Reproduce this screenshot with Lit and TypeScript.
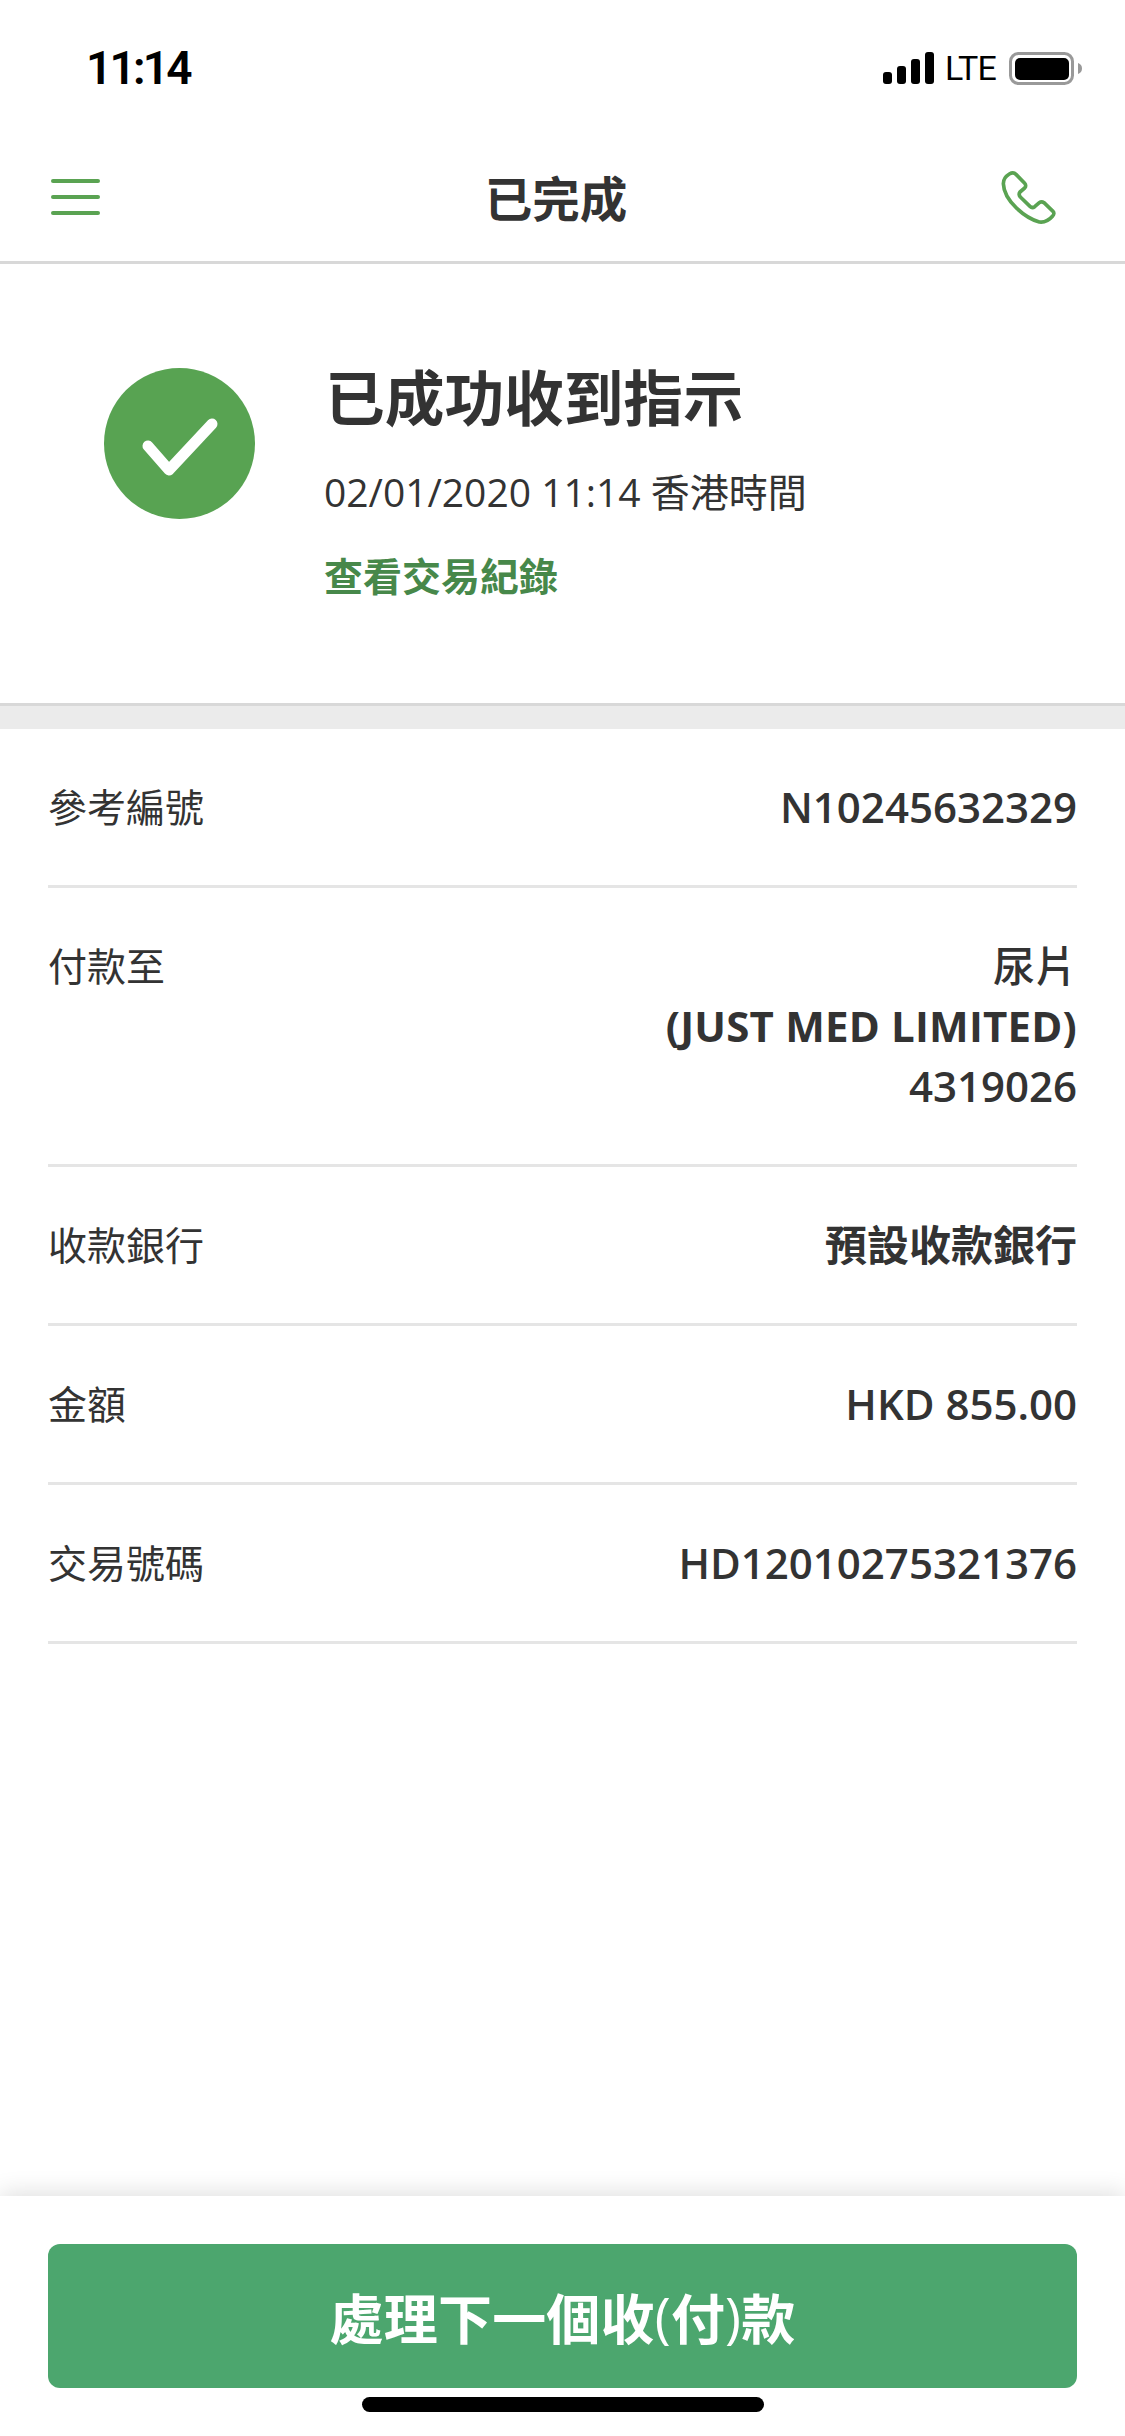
import { LitElement, html, css } from 'lit';
import { customElement } from 'lit/decorators.js';

const ROWS = [
  { label: '參考編號', value: html`N10245632329` },
  {
    label: '付款至',
    value: html`<div class="medium">尿片</div><div class="bold wide">(JUST MED LIMITED)</div><div>4319026</div>`,
  },
  { label: '收款銀行', value: html`<span class="bold">預設收款銀行</span>` },
  { label: '金額', value: html`HKD 855.00` },
  { label: '交易號碼', value: html`HD12010275321376` },
];

@customElement('app-root')
export class AppRoot extends LitElement {
  static styles = css`
    :host {
      display: block;
      font-family: 'Open Sans', 'Noto Sans CJK TC', sans-serif;
      color: #333;
      background: #fff;
    }
    .page {
      display: flex;
      flex-direction: column;
      height: 2436px;
      overflow: hidden;
    }

    /* status bar */
    .status {
      display: flex;
      align-items: center;
      justify-content: space-between;
      height: 132px;
      padding: 4px 43px 0 86px;
      box-sizing: border-box;
      color: #000;
    }
    .time {
      font-family: Roboto, sans-serif;
      font-size: 46px;
      font-weight: 600;
      letter-spacing: -2.8px;
    }
    .status-right {
      display: flex;
      align-items: center;
      gap: 13px;
    }
    .lte {
      font-family: Roboto, sans-serif;
      font-size: 34px;
      font-weight: 400;
      letter-spacing: -0.8px;
      margin-left: -3px;
    }

    /* nav */
    .nav {
      display: flex;
      align-items: center;
      justify-content: space-between;
      height: 129px;
      padding: 0 45px 0 51px;
      border-bottom: 3px solid #d8d8d8;
    }
    .nav-title {
      font-size: 47.5px;
      font-weight: 700;
      margin-left: 32px;
    }
    .menu {
      display: flex;
      flex-direction: column;
      gap: 12px;
      width: 49px;
    }
    .menu span {
      height: 4px;
      border-radius: 2px;
      background: #5aa352;
    }

    /* result summary */
    .hero {
      display: flex;
      gap: 69px;
      height: 442px;
      padding: 104px 0 0 104px;
      box-sizing: border-box;
      border-bottom: 3px solid #d8d8d8;
    }
    .hero-text {
      margin-top: -6px;
    }
    .hero-title {
      font-size: 59.7px;
      font-weight: 700;
      line-height: 72px;
      margin-left: 1px;
    }
    .hero-date {
      font-size: 39px;
      line-height: 52px;
      margin-top: 32px;
    }
    .hero-link {
      font-size: 39px;
      font-weight: 700;
      line-height: 52px;
      margin-top: 32px;
      color: #47884a;
    }
    .gap {
      height: 23px;
      background: #ebebeb;
    }

    /* detail rows */
    .rows {
      flex: 1;
      padding: 0 48px;
    }
    .row {
      display: flex;
      justify-content: space-between;
      padding: 48px 0;
      line-height: 60px;
      border-bottom: 3px solid #e5e5e5;
      font-size: 39px;
    }
    .row-value {
      font-size: 42px;
      font-weight: 550;
      text-align: right;
    }
    .medium {
      font-weight: 500;
    }
    .bold {
      font-weight: 700;
    }
    .wide {
      letter-spacing: 0.2px;
    }

    /* footer */
    .footer {
      height: 240px;
      padding: 48px 48px 0;
      box-sizing: border-box;
      position: relative;
      background: #fff;
      box-shadow: 0 -4px 22px rgba(0, 0, 0, 0.12);
    }
    .button {
      display: flex;
      align-items: center;
      justify-content: center;
      height: 144px;
      border-radius: 12px;
      background: #4ca66e;
      color: #fff;
      font-size: 54px;
      font-weight: 700;
      letter-spacing: 0.2px;
    }
    .paren {
      font-weight: 400;
    }
    .home {
      position: absolute;
      left: 362px;
      top: 201px;
      width: 402px;
      height: 15px;
      border-radius: 8px;
      background: #000;
    }
  `;

  render() {
    return html`
      <div class="page">
        <div class="status">
          <div class="time">11:14</div>
          <div class="status-right">
            <svg width="52" height="32" viewBox="0 0 52 32">
              <rect x="0" y="20" width="9" height="12" rx="3" fill="#000" />
              <rect x="14" y="14" width="9" height="18" rx="3" fill="#000" />
              <rect x="28" y="7" width="9" height="25" rx="3" fill="#000" />
              <rect x="42" y="0" width="9" height="32" rx="3" fill="#000" />
            </svg>
            <span class="lte">LTE</span>
            <svg width="73" height="33" viewBox="0 0 73 33">
              <rect x="1.5" y="1.5" width="62" height="30" rx="8" fill="none" stroke="#999" stroke-width="3" />
              <rect x="6" y="6" width="54" height="22" rx="5" fill="#000" />
              <path d="M69 11 C72 12 73 14 73 16.5 C73 19 72 21 69 22 Z" fill="#999" />
            </svg>
          </div>
        </div>
        <div class="nav">
          <div class="menu"><span></span><span></span><span></span></div>
          <div class="nav-title">已完成</div>
          <svg width="100" height="90" viewBox="0 0 300 270">
            <path
              d="M88 66 C95 62 103 62 108 67 L134 94 C138 98 138 104 134 108 L120 120 C116 125 117 130 121 135 L150 163 C154 167 160 167 164 164 L178 152 C183 148 188 149 192 152 L219 178 C223 182 222 188 218 192 C206 206 193 212 178 210 C140 200 72 150 70 95 C70 82 78 72 88 66 Z"
              fill="none"
              stroke="#5aa352"
              stroke-width="11"
              stroke-linejoin="round"
            />
          </svg>
        </div>
        <div class="hero">
          <svg width="151" height="151" viewBox="0 0 151 151">
            <circle cx="75.5" cy="75.5" r="75.5" fill="#58a352" />
            <path d="M44 78 L65 102 L108 56" fill="none" stroke="#fff" stroke-width="11" stroke-linecap="round" stroke-linejoin="round" />
          </svg>
          <div class="hero-text">
            <div class="hero-title">已成功收到指示</div>
            <div class="hero-date">02/01/2020 11:14 香港時間</div>
            <div class="hero-link">查看交易紀錄</div>
          </div>
        </div>
        <div class="gap"></div>
        <div class="rows">
          ${ROWS.map(
            (r) => html`
              <div class="row">
                <div>${r.label}</div>
                <div class="row-value">${r.value}</div>
              </div>
            `
          )}
        </div>
        <div class="footer">
          <div class="button">處理下一個收<span class="paren">(</span>付<span class="paren">)</span>款</div>
          <div class="home"></div>
        </div>
      </div>
    `;
  }
}
